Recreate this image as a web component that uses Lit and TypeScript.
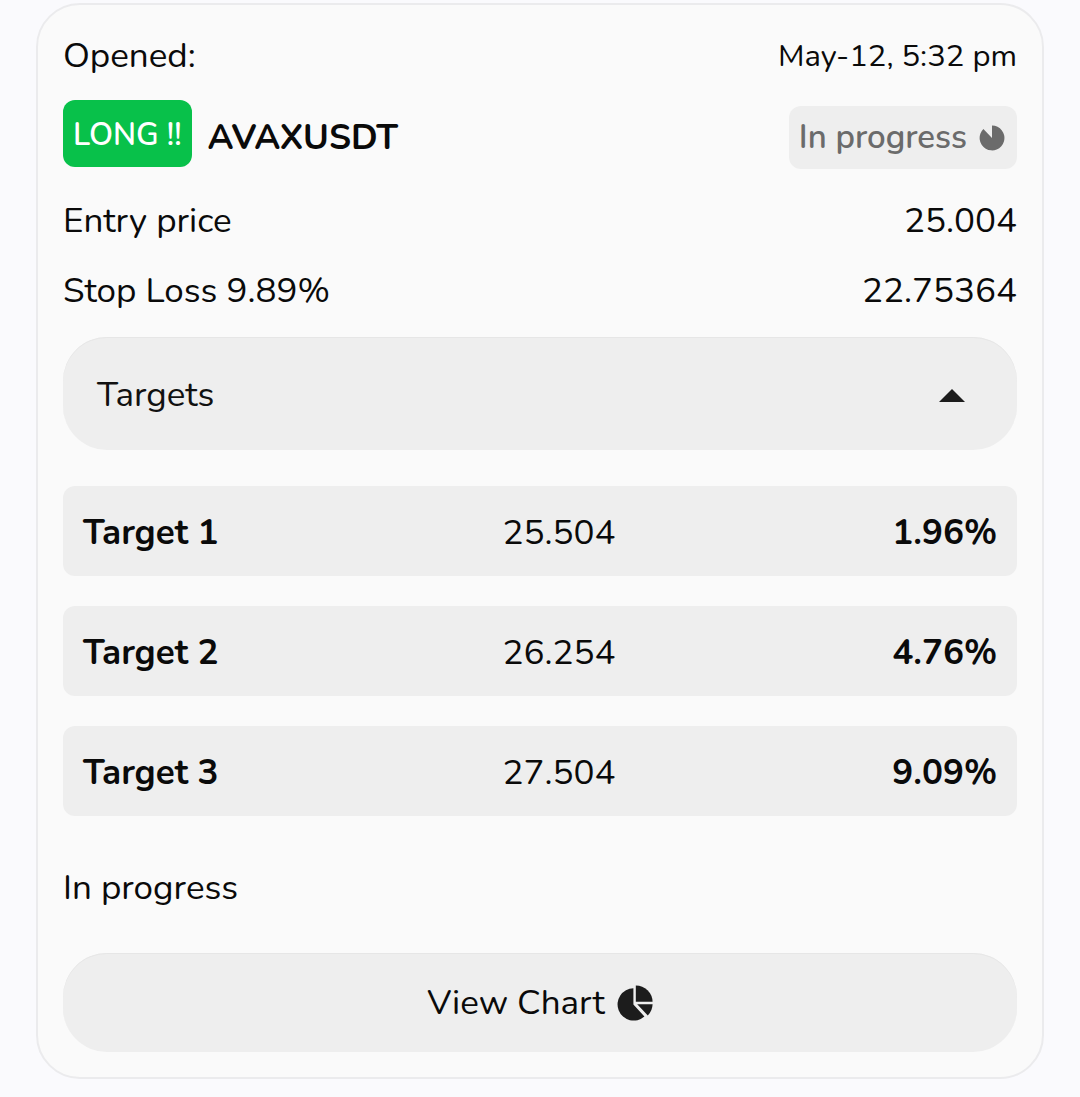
import { LitElement, html, css, svg, nothing } from "lit";
import { customElement, property, state } from "lit/decorators.js";

interface Target {
  name: string;
  price: string;
  gain: string;
}

const progressIcon = svg`
  <svg class="progress-icon" viewBox="0 0 26 26" aria-hidden="true">
    <path fill="currentColor" d="M13 13V.6A12.4 12.4 0 1 1 4.4 4.1Z" />
  </svg>`;

const pieIcon = svg`
  <svg class="pie-icon" viewBox="0 0 36 36" aria-hidden="true">
    <g fill="currentColor">
      <path d="M16.4 3.2V19.4L27.4 31.6A16.2 16.2 0 1 1 16.4 3.2Z" />
      <path d="M18.8.4A16.8 16.8 0 0 1 35.6 16.8H18.8Z" />
      <path d="M20.2 19.2H35.6A16.8 16.8 0 0 1 30.8 30.4Z" />
    </g>
  </svg>`;

@customElement("target-list")
class TargetList extends LitElement {
  @property({ attribute: false }) targets: Target[] = [];
  @state() private open = true;

  static styles = css`
    :host {
      display: block;
    }
    .toggle {
      display: flex;
      align-items: center;
      justify-content: space-between;
      width: 100%;
      margin: 0;
      padding: 32px 52px 29px 34px;
      border: 0;
      border-radius: 44px;
      background: #eeeeee;
      box-shadow: inset 0 1px 0 #e6e6e6;
      color: #111111;
      font: inherit;
      cursor: pointer;
    }
    .caret {
      width: 26px;
      height: 13px;
      color: #1c1c1c;
    }
    .caret.closed {
      transform: rotate(180deg);
    }
    .targets {
      width: 100%;
      margin-top: 6px;
      border-collapse: separate;
      border-spacing: 0 30px;
      table-layout: fixed;
    }
    .cell {
      box-sizing: border-box;
      height: 90px;
      padding: 4px 20px 0;
      background: #eeeeee;
      text-align: center;
    }
    .name {
      width: 36%;
      border-radius: 12px 0 0 12px;
      text-align: left;
      font-weight: 700;
    }
    .gain {
      border-radius: 0 12px 12px 0;
      text-align: right;
      font-weight: 700;
    }
  `;

  render() {
    return html`
      <button
        class="toggle"
        aria-expanded=${this.open ? "true" : "false"}
        @click=${() => (this.open = !this.open)}
      >
        <span>Targets</span>
        <svg class="caret ${this.open ? "" : "closed"}" viewBox="0 0 26 13" aria-hidden="true">
          <path fill="currentColor" d="M13 0 26 13H0Z" />
        </svg>
      </button>
      ${this.open
        ? html`<table class="targets">
            <tbody>
              ${this.targets.map(
                (t) => html`<tr>
                  <th class="cell name" scope="row">${t.name}</th>
                  <td class="cell">${t.price}</td>
                  <td class="cell gain">${t.gain}</td>
                </tr>`
              )}
            </tbody>
          </table>`
        : nothing}
    `;
  }
}

@customElement("app-root")
class AppRoot extends LitElement {
  private targets: Target[] = [
    { name: "Target 1", price: "25.504", gain: "1.96%" },
    { name: "Target 2", price: "26.254", gain: "4.76%" },
    { name: "Target 3", price: "27.504", gain: "9.09%" },
  ];

  static styles = css`
    :host {
      display: block;
      box-sizing: border-box;
      min-height: 100vh;
      padding: 3px 36px 18px;
      background: #fafafd;
      color: #0a0a0a;
      font: 400 35px/52px Nunito, "Open Sans", sans-serif;
    }
    .card {
      padding: 25px;
      border: 2px solid #ebebed;
      border-radius: 44px;
      background: #fafafa;
    }
    .row {
      display: flex;
      align-items: center;
      justify-content: space-between;
    }
    .date {
      font-size: 31px;
    }
    .pair {
      align-items: flex-end;
      margin: 18px 0 17px;
    }
    .symbol {
      display: flex;
      align-items: flex-start;
      gap: 16px;
    }
    .side {
      padding: 4px 10px 0;
      border-radius: 12px;
      background: #08c14a;
      color: #ffffff;
      font-size: 31px;
      font-weight: 600;
      line-height: 63px;
    }
    .ticker {
      margin: 0;
      padding-top: 6px;
      font-size: 35px;
      font-weight: 700;
      line-height: 63px;
    }
    .status {
      display: flex;
      align-items: center;
      gap: 12px;
      padding: 0 12px 0 10px;
      border-radius: 12px;
      background: #eeeeee;
      color: #6b6b6b;
      font-size: 33px;
      font-weight: 600;
      line-height: 63px;
    }
    .progress-icon {
      width: 26px;
      height: 26px;
    }
    .price {
      padding: 9px 0;
    }
    .list {
      margin-top: 11px;
    }
    .note {
      margin: 16px 0 39px;
    }
    .chart {
      display: flex;
      align-items: center;
      justify-content: center;
      gap: 12px;
      width: 100%;
      margin: 0;
      padding: 24px 0 23px;
      border: 0;
      border-radius: 44px;
      background: #eeeeee;
      box-shadow: inset 0 1px 0 #e6e6e6;
      color: #0a0a0a;
      font: inherit;
      cursor: pointer;
    }
    .pie-icon {
      width: 36px;
      height: 36px;
      color: #1c1c1c;
    }
  `;

  render() {
    return html`
      <article class="card">
        <div class="row">
          <span>Opened:</span>
          <time class="date">May-12, 5:32 pm</time>
        </div>
        <div class="row pair">
          <div class="symbol">
            <span class="side">LONG !!</span>
            <h2 class="ticker">AVAXUSDT</h2>
          </div>
          <span class="status">In progress ${progressIcon}</span>
        </div>
        <div class="row price"><span>Entry price</span><span>25.004</span></div>
        <div class="row price"><span>Stop Loss 9.89%</span><span>22.75364</span></div>
        <target-list class="list" .targets=${this.targets}></target-list>
        <p class="note">In progress</p>
        <button class="chart"><span>View Chart</span>${pieIcon}</button>
      </article>
    `;
  }
}
